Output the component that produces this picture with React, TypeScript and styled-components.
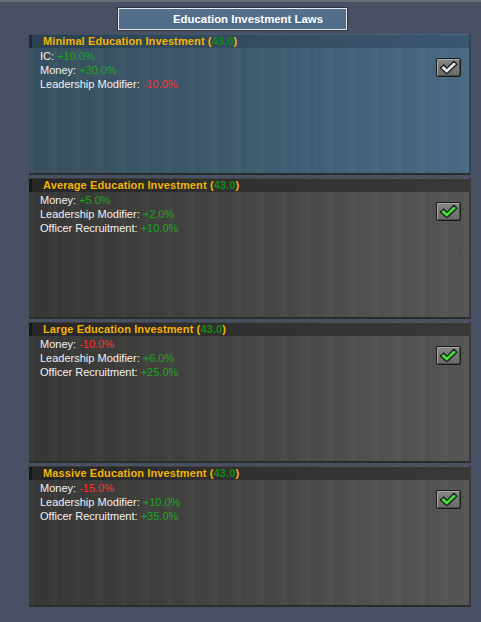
import React from "react";
import styled, { createGlobalStyle } from "styled-components";

const Global = createGlobalStyle`
  html, body { margin: 0; padding: 0; background: #4a5064; }
  body { font-family: "Liberation Sans", Arial, sans-serif; }
`;

const Screen = styled.div`
  width: 481px;
  height: 622px;
  background: #4a5064;
  border-top: 2px solid #6b6d74;
  box-sizing: border-box;
  display: flex;
  flex-direction: column;
  align-items: stretch;
  overflow: hidden;
`;

const TitleRow = styled.div`
  display: flex;
  justify-content: flex-start;
  padding: 6px 0 0 118px;
  height: 26px;
  box-sizing: border-box;
`;

const TitleBox = styled.div`
  width: 229px;
  height: 22px;
  box-sizing: border-box;
  border: 1px solid #e8ecf0;
  outline: 1px solid #2e3444;
  background: linear-gradient(#55708c, #4d6a88);
  color: #ffffff;
  font-weight: bold;
  font-size: 11.4px;
  display: flex;
  align-items: center;
  justify-content: flex-start;
  padding-left: 54px;
`;

const List = styled.div`
  display: flex;
  flex-direction: column;
  gap: 3px;
  padding: 6px 10px 0 29px;
`;

const streaks = `repeating-linear-gradient(90deg,
  rgba(255,255,255,0.00) 0px, rgba(255,255,255,0.03) 3px,
  rgba(0,0,0,0.03) 7px, rgba(255,255,255,0.00) 11px,
  rgba(0,0,0,0.02) 17px, rgba(255,255,255,0.02) 23px)`;

const Panel = styled.div<{ $active?: boolean }>`
  position: relative;
  height: 141px;
  box-sizing: border-box;
  border-bottom: 2px solid #26302a;
  background: ${(p) =>
    p.$active
      ? `${streaks}, linear-gradient(90deg, #37505f 0%, #3f5b70 50%, #4a6a84 100%)`
      : `${streaks}, linear-gradient(90deg, #363636 0%, #3e3f3c 25%, #474746 55%, #525250 80%, #555555 100%)`};
  border-right: 2px solid ${(p) => (p.$active ? "#2f4555" : "#3a3a3a")};
`;

const Header = styled.div<{ $active?: boolean }>`
  height: 13px;
  margin-top: 1px;
  background: ${(p) =>
    p.$active
      ? "linear-gradient(90deg, #2b4050, #324a5c 40%, #3a5670)"
      : "linear-gradient(90deg, #262626, #2f2f2f 40%, #393939)"};
  border-left: 3px solid ${(p) => (p.$active ? "#1d2c38" : "#181818")};
  display: flex;
  align-items: center;
  padding-left: 11px;
  font-size: 11px;
  font-weight: bold;
  letter-spacing: 0.12px;
  color: #f4b400;
  white-space: nowrap;
  line-height: 13px;
`;

const Score = styled.span`
  color: #138a13;
`;

const Lines = styled.div`
  display: flex;
  flex-direction: column;
  padding: 1px 0 0 11px;
`;

const Line = styled.div`
  font-size: 11px;
  line-height: 14px;
  color: #f2f2f2;
  white-space: nowrap;
`;

const Value = styled.span<{ $neg?: boolean }>`
  color: ${(p) => (p.$neg ? "#ff3030" : "#1fa51f")};
`;

const Check = styled.div`
  position: absolute;
  right: 8px;
  top: 24px;
  width: 25px;
  height: 19px;
  box-sizing: border-box;
  border: 1px solid #1a1a1a;
  border-radius: 2px;
  background: linear-gradient(#858785, #696b69);
  box-shadow: inset 1px 1px 0 #a8aaa8, inset -1px -1px 0 #4a4c4a;
  display: flex;
  align-items: center;
  justify-content: center;
`;

type Effect = { label: string; value: string };
type Law = { name: string; effects: Effect[]; active?: boolean };

const laws: Law[] = [
  {
    name: "Minimal Education Investment",
    active: true,
    effects: [
      { label: "IC", value: "+10.0%" },
      { label: "Money", value: "+30.0%" },
      { label: "Leadership Modifier", value: "-10.0%" },
    ],
  },
  {
    name: "Average Education Investment",
    effects: [
      { label: "Money", value: "+5.0%" },
      { label: "Leadership Modifier", value: "+2.0%" },
      { label: "Officer Recruitment", value: "+10.0%" },
    ],
  },
  {
    name: "Large Education Investment",
    effects: [
      { label: "Money", value: "-10.0%" },
      { label: "Leadership Modifier", value: "+6.0%" },
      { label: "Officer Recruitment", value: "+25.0%" },
    ],
  },
  {
    name: "Massive Education Investment",
    effects: [
      { label: "Money", value: "-15.0%" },
      { label: "Leadership Modifier", value: "+10.0%" },
      { label: "Officer Recruitment", value: "+35.0%" },
    ],
  },
];

function Tick({ green }: { green: boolean }) {
  const fill = green ? "#3ce23c" : "#e6e6e6";
  return (
    <svg width="19" height="15" viewBox="0 0 17 13">
      <path
        d="M1.2 7 L4.3 4.3 L7 7.3 L13.4 0.9 L16 3.5 L7 12 Z"
        fill={fill}
        stroke="#1c1c1c"
        strokeWidth="1.2"
        strokeLinejoin="round"
      />
    </svg>
  );
}

export default function App() {
  return (
    <>
      <Global />
      <Screen>
        <TitleRow>
          <TitleBox>Education Investment Laws</TitleBox>
        </TitleRow>
        <List>
          {laws.map((law) => (
            <Panel key={law.name} $active={law.active}>
              <Header $active={law.active}>
                {law.name}&nbsp;(<Score>43.0</Score>)
              </Header>
              <Lines>
                {law.effects.map((e) => (
                  <Line key={e.label}>
                    {e.label}: <Value $neg={e.value.startsWith("-")}>{e.value}</Value>
                  </Line>
                ))}
              </Lines>
              <Check>
                <Tick green={!law.active} />
              </Check>
            </Panel>
          ))}
        </List>
      </Screen>
    </>
  );
}
